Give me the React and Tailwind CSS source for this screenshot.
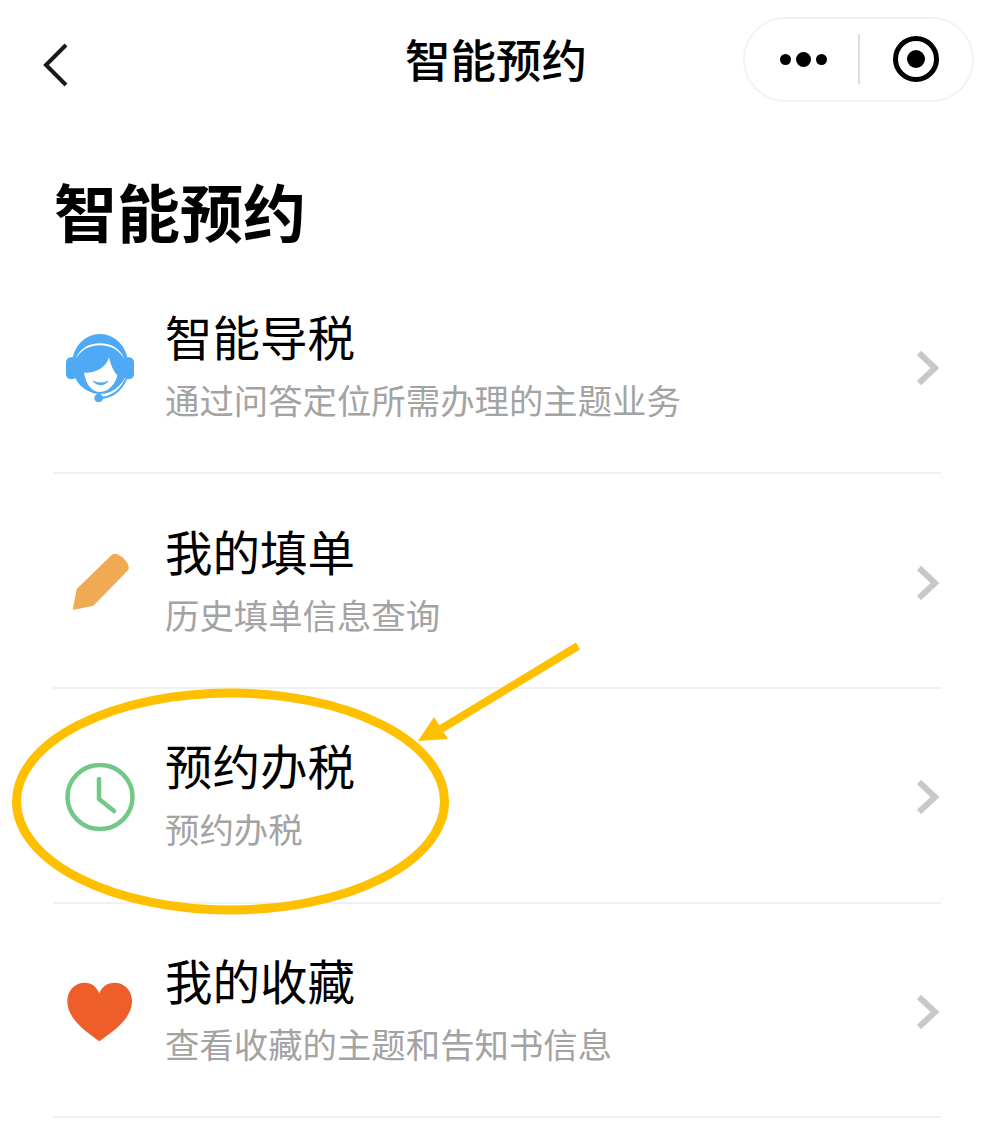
const FONT = "font-['Noto_Sans_CJK_SC','Noto_Sans',sans-serif]";

function HeadsetIcon() {
  return (
    <svg width="68" height="68" viewBox="78 70 204 204">
      <ellipse cx="180" cy="160" rx="84" ry="90" fill="#4fa9f5" />
      <rect x="78" y="140" width="34" height="66" rx="15" fill="#4fa9f5" />
      <rect x="248" y="140" width="34" height="66" rx="15" fill="#4fa9f5" />
      <path d="M106 146 C120 112 148 98 180 98 C212 98 240 112 254 146 C238 118 212 104 180 104 C148 104 122 118 106 146 Z" fill="#fff" />
      <path d="M132 186 C165 188 198 172 207 140 C212 162 220 182 232 194 C226 222 205 244 180 244 C156 244 138 222 132 186 Z" fill="#fff" />
      <path d="M152 244 C130 236 114 222 106 208 L96 264 L160 264 Z" fill="#fff" />
      <path d="M222 238 C236 230 246 218 254 206 L264 264 L200 264 Z" fill="#fff" />
      <path d="M160 211 C172 226 192 226 204 211 C192 219 172 219 160 211 Z" fill="#4fa9f5" stroke="#4fa9f5" strokeWidth="3" />
      <path d="M176 262 C210 262 240 245 258 205" fill="none" stroke="#4fa9f5" strokeWidth="6" />
      <circle cx="176" cy="262" r="13" fill="#4fa9f5" />
    </svg>
  );
}

function PencilIcon() {
  return (
    <svg width="68" height="68" viewBox="78 50 204 204">
      <path d="M98 233 L110 170 L215 68 Q222 62 232 66 Q258 78 266 102 Q268 110 262 116 L160 220 Z" fill="#f0aa53" />
    </svg>
  );
}

function ClockIcon() {
  return (
    <svg width="70" height="68" viewBox="0 0 70 68" fill="none" stroke="#72c987" strokeLinecap="round" strokeLinejoin="round">
      <ellipse cx="35" cy="34" rx="32.5" ry="32" strokeWidth="4.5" />
      <path d="M34 16 L34 36 L49 48" strokeWidth="4.5" />
    </svg>
  );
}

function HeartIcon() {
  return (
    <svg width="66" height="60" viewBox="82 64 196 180">
      <path d="M178 242 C150 220 82 180 82 122 C82 88 106 66 134 66 C154 66 170 78 178 98 C186 78 202 66 224 66 C252 66 276 88 276 122 C276 180 206 220 178 242 Z" fill="#ee5e2a" />
    </svg>
  );
}

function Chevron() {
  return (
    <svg width="24" height="36" viewBox="0 0 24 36" fill="none" stroke="#c8c8cc" strokeWidth="6">
      <path d="M3 3 L19 18 L3 33" />
    </svg>
  );
}

const rows = [
  { title: "智能导税", desc: "通过问答定位所需办理的主题业务", icon: <HeadsetIcon /> },
  { title: "我的填单", desc: "历史填单信息查询", icon: <PencilIcon /> },
  { title: "预约办税", desc: "预约办税", icon: <ClockIcon /> },
  { title: "我的收藏", desc: "查看收藏的主题和告知书信息", icon: <HeartIcon /> },
];

function Row({ row }) {
  return (
    <div className="flex h-[214.7px] items-center border-b-2 border-[#f0f0f0]">
      <div className="mt-1 flex w-[93px] justify-center">{row.icon}</div>
      <div className="ml-[19px] flex-1 pb-[3px]">
        <div className="text-[47.5px] leading-[62px] text-black">{row.title}</div>
        <div className="mt-[7px] text-[34.4px] leading-[50px] text-[#a3a3a3]">{row.desc}</div>
      </div>
      <div className="mr-[1px] mt-1 flex w-[24px] justify-center"><Chevron /></div>
    </div>
  );
}

export default function App() {
  return (
    <div className={`relative h-[1125px] w-[994px] overflow-hidden bg-white ${FONT}`}>
      {/* nav bar */}
      <div className="flex h-[118px] items-center pl-[43px] pr-[20px]">
        <div className="w-[362px]">
          <svg width="25" height="44" viewBox="0 0 25 44" fill="none" stroke="#1a1a1a" strokeWidth="4" className="mt-[11px]">
            <path d="M23 2 L3 22 L23 42" />
          </svg>
        </div>
        <div className="-mt-[1px] text-[45.5px] font-medium leading-none text-black">智能预约</div>
        <div className="ml-auto flex h-[85px] w-[231px] items-center rounded-full border-2 border-[#f2f2f2]">
          <div className="flex w-[113px] items-center justify-center gap-[5px] pl-[4px]">
            <span className="h-[11px] w-[11px] rounded-full bg-black" />
            <span className="h-[15px] w-[15px] rounded-full bg-black" />
            <span className="h-[11px] w-[11px] rounded-full bg-black" />
          </div>
          <div className="h-[50px] w-[2px] bg-[#dcdcdc]" />
          <div className="flex flex-1 justify-center">
            <div className="flex h-[46px] w-[46px] items-center justify-center rounded-full border-[5px] border-black">
              <span className="h-[18px] w-[18px] rounded-full bg-black" />
            </div>
          </div>
        </div>
      </div>

      <div className="mx-[53px]">
        <div className="h-[141.5px] pt-[53px] pl-[1px] text-[63px] font-bold leading-[78px] text-black">智能预约</div>
        {rows.map((row) => (
          <Row key={row.title} row={row} />
        ))}
      </div>

      {/* annotation drawn over the page */}
      <svg className="absolute left-0 top-0" width="994" height="1125" fill="none">
        <ellipse cx="230.5" cy="801.5" rx="214" ry="108.5" stroke="#ffc000" strokeWidth="9" />
        <path d="M578 646 L436 732" stroke="#ffc000" strokeWidth="8" />
        <path d="M418 741 L434 717 L448 739 Z" fill="#ffc000" />
      </svg>
    </div>
  );
}
